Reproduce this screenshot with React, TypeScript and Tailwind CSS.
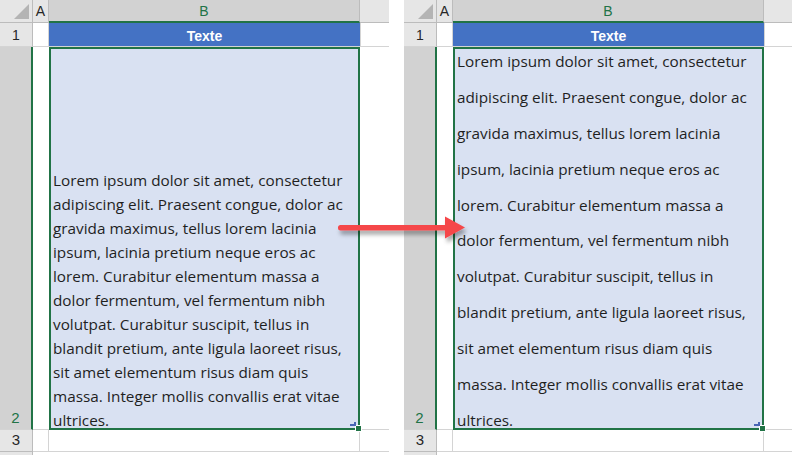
import React from 'react';

const lines = [
  'Lorem ipsum dolor sit amet, consectetur',
  'adipiscing elit. Praesent congue, dolor ac',
  'gravida maximus, tellus lorem lacinia',
  'ipsum, lacinia pretium neque eros ac',
  'lorem. Curabitur elementum massa a',
  'dolor fermentum, vel fermentum nibh',
  'volutpat. Curabitur suscipit, tellus in',
  'blandit pretium, ante ligula laoreet risus,',
  'sit amet elementum risus diam quis',
  'massa. Integer mollis convallis erat vitae',
  'ultrices.',
];

const font = { fontFamily: '"Liberation Sans", Arial, sans-serif' };
const cellFont = { fontFamily: '"Open Sans", "Liberation Sans", sans-serif' };

function Sheet({ distributed }: { distributed: boolean }) {
  return (
    <div
      className="relative grid h-[455px] grid-cols-[33px_16px_311px_1fr] grid-rows-[23px_24px_383px_22px_1fr] bg-white text-[#262626]"
      style={font}
    >
      {/* header row */}
      <div className="relative border-r border-b border-[#bcbcbc] bg-[#e6e6e6]">
        <svg className="absolute right-[3px] bottom-[3px]" width="15" height="15">
          <polygon points="15,0 15,15 0,15" fill="#b4b4b4" />
        </svg>
      </div>
      <div className="flex items-center justify-center border-r border-b border-[#bcbcbc] bg-[#e6e6e6] pt-[1px] text-[14px]">A</div>
      <div className="flex items-center justify-center border-r border-b-2 border-r-[#bcbcbc] border-b-[#217346] bg-[#d2d2d2] pt-[1px] text-[14px] text-[#217346]">B</div>
      <div className="border-b border-[#bcbcbc] bg-[#e6e6e6]" />

      {/* row 1 */}
      <div className="flex items-center justify-center border-r border-b border-r-[#bcbcbc] border-b-[#d4d4d4] bg-[#e6e6e6] pt-[2px] text-[14px]">1</div>
      <div className="border-r border-b border-[#d4d4d4]" />
      <div className="flex items-center justify-center border-b border-[#d4d4d4] bg-[#4472c4] pt-[3px] text-[14px] font-bold text-white">Texte</div>
      <div className="border-b border-l border-[#d4d4d4]" />

      {/* row 2 */}
      <div className="flex items-end justify-center border-r-2 border-b border-r-[#217346] border-b-[#d4d4d4] bg-[#d2d2d2] text-[15px] leading-[22px] text-[#217346]">2</div>
      <div className="border-r-0 border-b border-[#d4d4d4]" />
      <div className="relative border-2 border-[#217346] bg-[#d9e1f2] pl-[2px] text-[#1f1f1f]" style={cellFont}>
        <div
          className={`-mb-[4px] flex h-[calc(100%+4px)] flex-col text-[15.3px] leading-[24px] ${
            distributed ? 'justify-between' : 'justify-end'
          }`}
        >
          {lines.map((l) => (
            <div key={l} className="whitespace-nowrap">
              {l}
            </div>
          ))}
        </div>
        <div className="absolute -right-[4px] -bottom-[4px] h-[7px] w-[7px] border border-white bg-[#217346]" />
        <div className="absolute right-[4px] bottom-[2px] h-[2px] w-[4px] bg-[#4a66b5]" />
        <div className="absolute right-[2px] bottom-[2px] h-[4px] w-[2px] bg-[#4a66b5]" />
      </div>
      <div className="border-b border-[#d4d4d4]" />

      {/* row 3 */}
      <div className="flex items-center justify-center border-r border-b border-r-[#bcbcbc] border-b-[#bcbcbc] bg-[#e6e6e6] text-[15px]">3</div>
      <div className="border-r border-b border-[#d4d4d4]" />
      <div className="border-r border-b border-[#d4d4d4]" />
      <div className="border-b border-[#d4d4d4]" />

      {/* rest */}
      <div className="border-r border-[#bcbcbc] bg-[#e6e6e6]" />
      <div />
      <div />
      <div />
    </div>
  );
}

export default function App() {
  return (
    <div className="relative flex h-[455px] w-[792px] gap-[15px] overflow-hidden bg-white">
      <div className="w-[389px]">
        <Sheet distributed={false} />
      </div>
      <div className="w-[388px]">
        <Sheet distributed={true} />
      </div>
      <svg className="absolute top-[212px] left-[334px]" width="140" height="40">
        <defs>
          <filter id="sh" x="-20%" y="-50%" width="140%" height="200%">
            <feDropShadow dx="2" dy="4" stdDeviation="2" floodColor="#000" floodOpacity="0.35" />
          </filter>
        </defs>
        <g filter="url(#sh)">
          <rect x="4" y="13" width="112" height="5.5" rx="2.5" fill="#f5474a" />
          <polygon points="111,4.5 131,15.5 111,26.5" fill="#f5474a" />
        </g>
      </svg>
    </div>
  );
}
